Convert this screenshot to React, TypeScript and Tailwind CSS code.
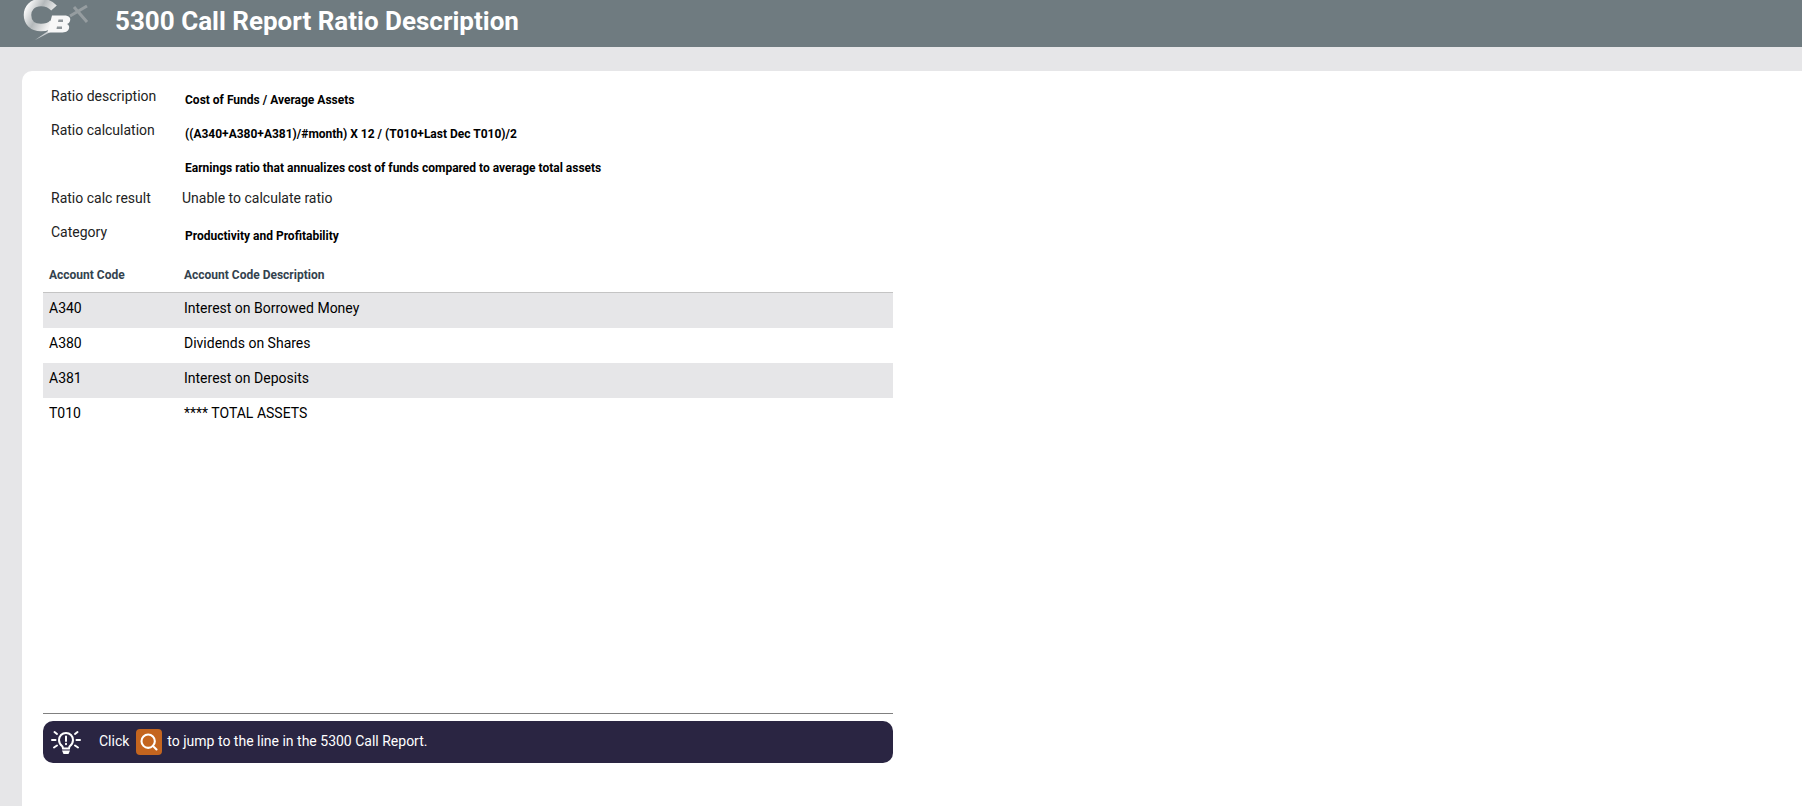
import React from 'react';
import { Search } from 'lucide-react';

const accounts = [
  { code: 'A340', description: 'Interest on Borrowed Money' },
  { code: 'A380', description: 'Dividends on Shares' },
  { code: 'A381', description: 'Interest on Deposits' },
  { code: 'T010', description: '**** TOTAL ASSETS' },
];

const Logo = () => (
  <svg width="100" height="47" viewBox="0 0 100 47" className="shrink-0">
    <defs>
      <linearGradient id="cGrad" x1="0" y1="0" x2="1" y2="0.5">
        <stop offset="0" stopColor="#ffffff" />
        <stop offset="0.5" stopColor="#b4b9bb" />
        <stop offset="1" stopColor="#f0f0f0" />
      </linearGradient>
    </defs>
    {/* streak */}
    <path d="M35 40L61 22L64 25Z" fill="#c9cdcf" />
    {/* x */}
    <path d="M70 16L87 6M74 7L87 22" stroke="#969da0" strokeWidth="3" fill="none" />
    {/* C */}
    <path d="M54 8C50 3.500 45 2.500 41 2.500C32 2.500 27.500 8.500 27.500 15C27.500 22 32 27.500 41 27.500C45 27.500 50 26.500 53 23" fill="none" stroke="url(#cGrad)" strokeWidth="7.500" />
    {/* B */}
    <path d="M52 15.500H64C69.500 15.500 71 18 70 21C69.500 22.500 68.500 23.500 67 24C69 25 69.500 26.500 69 28.500C68 31.500 65.500 32.500 61 32.500H47.500Z" fill="#f7f7f7" />
    <path d="M58.500 19.500H63V22H58ZM57 26.500H62V29H56.500Z" fill="#8e9599" />
  </svg>
);

const TipBulb = () => (
  <svg width="30" height="26" viewBox="0 0 30 26" fill="none" stroke="#ffffff" strokeLinecap="round" className="shrink-0">
    <path d="M11.500 17.500C9.500 16 8 14 8 11C8 7 11 4 15 4C19 4 22 7 22 11C22 14 20.500 16 18.500 17.500L18 19.500H12Z" strokeWidth="2" />
    <path d="M15 7.500V12M15 14.700V15.300" strokeWidth="2" />
    <path d="M11 21.500H19L17.500 25H12.500Z" fill="#ffffff" stroke="none" />
    <path d="M1 11H4.500M25.500 11H29M3.500 3L6 5M26.500 3L24 5M3 18.500L6 16.500M27 18.500L24 16.500" strokeWidth="2" />
  </svg>
);

const InfoRow = ({ label, value, plain }: { label?: string; value: string; plain?: boolean }) => (
  <div className="flex h-[34px] pl-2">
    <div className="w-[131px] shrink-0 pt-[7px] text-[14px] leading-[20px] text-[#222222]">{label}</div>
    {plain ? (
      <div className="pt-[7px] text-[14px] leading-[20px] text-[#222222]">{value}</div>
    ) : (
      <div className="pl-[3px] pt-[12px] text-[12px] leading-[18px] font-bold text-black">{value}</div>
    )}
  </div>
);

export default function App() {
  return (
    <div className="flex h-screen flex-col overflow-hidden bg-[#e6e6e8] font-['Roboto',sans-serif]">
      <header className="flex h-[47px] shrink-0 items-center bg-[#6f7b80]">
        <Logo />
        <h1 className="ml-[15px] pb-[4px] text-[26px] font-bold leading-[41px] text-white">5300 Call Report Ratio Description</h1>
      </header>

      <main className="mt-[24px] ml-[22px] flex-1 rounded-tl-[10px] bg-white pl-[21px] pt-[8px]">
        <div className="flex h-full w-[850px] flex-col">
          <InfoRow label="Ratio description" value="Cost of Funds / Average Assets" />
          <InfoRow label="Ratio calculation" value="((A340+A380+A381)/#month) X 12 / (T010+Last Dec T010)/2" />
          <InfoRow value="Earnings ratio that annualizes cost of funds compared to average total assets" />
          <InfoRow label="Ratio calc result" value="Unable to calculate ratio" plain />
          <InfoRow label="Category" value="Productivity and Profitability" />

          <div className="mt-[8px] flex h-[36px] items-center border-b border-[#c4c4c4] pt-[1px] text-[12px] font-bold text-[#33424e]">
            <div className="w-[141px] pl-[6px]">Account Code</div>
            <div>Account Code Description</div>
          </div>
          {accounts.map((row, i) => (
            <div key={row.code} className={`flex h-[35px] items-center pb-[4px] text-[14px] text-black ${i % 2 === 0 ? 'bg-[#e6e6e8]' : 'bg-white'}`}>
              <div className="w-[141px] pl-[6px]">{row.code}</div>
              <div>{row.description}</div>
            </div>
          ))}

          <div className="mt-[280px] border-t border-[#808080] pt-[7px]">
            <div className="flex h-[42px] items-center rounded-[10px] bg-[#2a2542] pl-[8px] text-[14px] text-white">
              <TipBulb />
              <span className="ml-[18px] pb-[1px]">Click</span>
              <span className="ml-[7px] flex h-[26px] w-[26px] items-center justify-center rounded-[4px] bg-[#c4651f]">
                <Search size={20} strokeWidth={2.500} className="text-white" />
              </span>
              <span className="ml-[5px] pb-[1px]">to jump to the line in the 5300 Call Report.</span>
            </div>
          </div>
        </div>
      </main>
    </div>
  );
}
